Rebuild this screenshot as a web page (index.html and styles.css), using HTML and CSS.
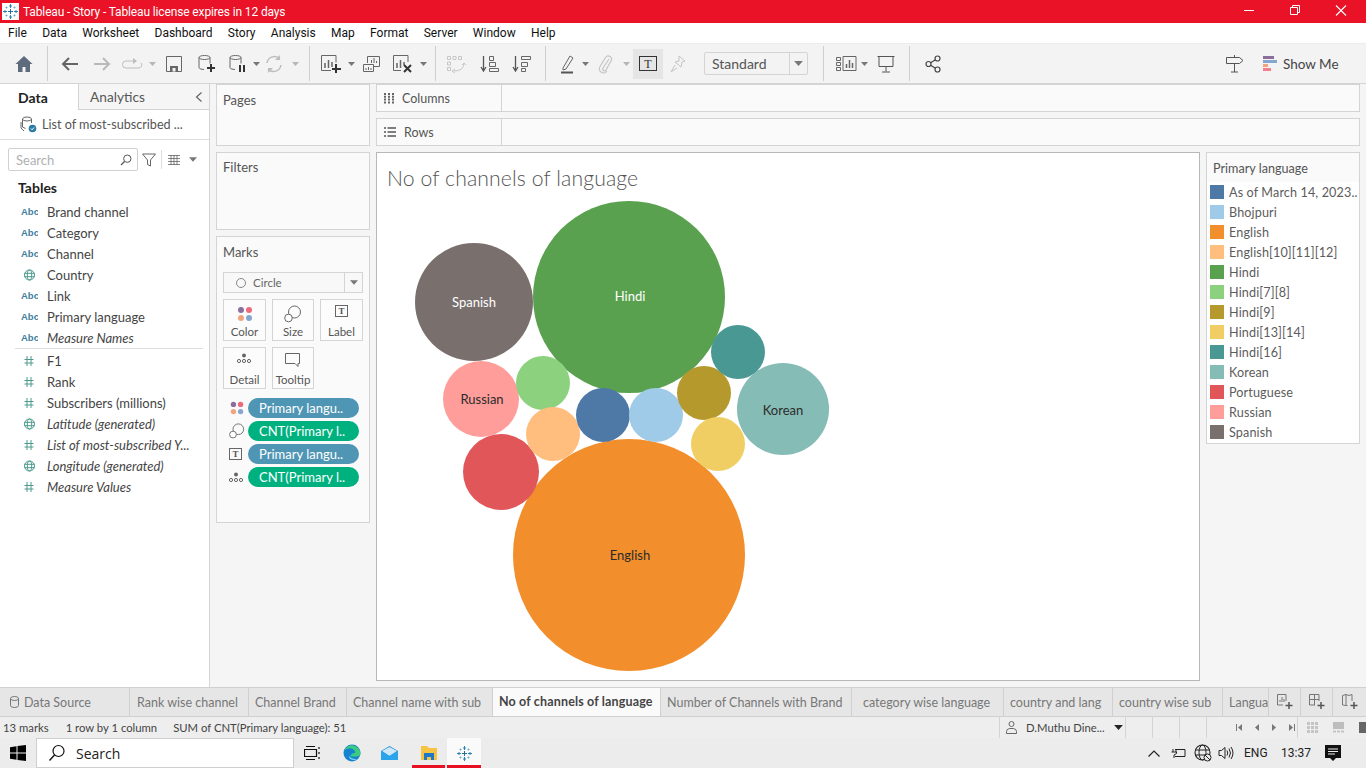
FILE: index.html
```html
<!DOCTYPE html>
<html lang="en">
<head>
<meta charset="utf-8">
<title>Tableau - Story</title>
<link rel="stylesheet" href="styles.css">
</head>
<body>
<svg class="defs" width="0" height="0" aria-hidden="true">
  <defs>
    <g id="i-abc"><text x="0" y="9" class="abc">Abc</text></g>
    <g id="i-hash"><path d="M3.5 1v10M7.5 1v10M1 4.500h9M1 8h9" stroke="#4d9a8c" fill="none"/></g>
    <g id="i-globe"><circle cx="6" cy="6" r="5" fill="none" stroke="#4d9a8c"/><ellipse cx="6" cy="6" rx="2.200" ry="5" fill="none" stroke="#4d9a8c"/><path d="M1 4.300h10M1 7.700h10" stroke="#4d9a8c"/></g>
    <g id="i-dots"><circle cx="5" cy="5" r="3" fill="#8a6f9c"/><circle cx="13" cy="5" r="3" fill="#ed6a7a"/><circle cx="5" cy="13" r="3" fill="#f2a57c"/><circle cx="13" cy="13" r="3" fill="#84a6cf"/></g>
    <g id="i-size"><circle cx="10.500" cy="7" r="6" fill="none" stroke="#666"/><circle cx="4.500" cy="13" r="3.800" fill="#fff" stroke="#666"/></g>
    <g id="i-label"><rect x=".5" y=".5" width="12" height="11" fill="none" stroke="#666"/><text x="6.500" y="9" class="t-ico">T</text></g>
    <g id="i-detail"><circle cx="7" cy="2.500" r="2" fill="#666"/><circle cx="2" cy="8" r="1.600" fill="none" stroke="#666"/><circle cx="7" cy="8" r="1.600" fill="none" stroke="#666"/><circle cx="12" cy="8" r="1.600" fill="none" stroke="#666"/></g>
    <g id="i-caret"><path d="M0 0h7L3.500 4z" fill="#777"/></g>
    <g id="i-caret-lt"><path d="M0 0h7L3.500 4z" fill="#b5b5b5"/></g>
    <g id="i-tab" fill="none">
      <path d="M8.500 6v5M6 8.500h5" stroke="#1f6f9f"/>
      <path d="M8.500 1v4M7 3h3M8.500 12v4M7 14h3M1 8.500h4M3 7v3M12 8.500h4M14 7v3" stroke="#2b83b3"/>
      <path d="M4.500 3.500v2M3.500 4.500h2M12.500 3.500v2M11.500 4.500h2M4.500 11.500v2M3.500 12.500h2M12.500 11.500v2M11.500 12.500h2" stroke="#6fa9c9"/>
    </g>
  </defs>
</svg>

<header class="titlebar">
  <svg class="tb-logo" width="17" height="17" viewBox="0 0 17 17"><rect width="17" height="17" fill="#fff"/><use href="#i-tab"/></svg>
  <span class="tb-title">Tableau - Story - Tableau license expires in 12 days</span>
  <div class="win-btns">
    <svg width="46" height="23" viewBox="0 0 46 23"><path d="M18 10.500h10" stroke="#fff"/></svg>
    <svg width="46" height="23" viewBox="0 0 46 23"><path d="M18.500 7.500h7v7h-7zM20.500 7.500v-2h7v7h-2" fill="none" stroke="#fff"/></svg>
    <svg width="46" height="23" viewBox="0 0 46 23"><path d="M18 5.500l10 10M28 5.500l-10 10" stroke="#fff" stroke-width="1.100"/></svg>
  </div>
</header>

<nav class="menubar">
  <span>File</span><span>Data</span><span>Worksheet</span><span>Dashboard</span><span>Story</span><span>Analysis</span><span>Map</span><span>Format</span><span>Server</span><span>Window</span><span>Help</span>
</nav>

<div class="toolbar">
  <svg class="ti" width="20" height="20" viewBox="0 0 20 20"><path d="M10 2 1.500 10H4v8h4.500v-5h3v5H16v-8h2.500z" fill="#5d6b7c"/></svg>
  <i class="sep s1"></i>
  <svg class="ti t-back" width="20" height="20" viewBox="0 0 20 20"><path d="M18 10H3M9 4l-6 6 6 6" fill="none" stroke="#666" stroke-width="2"/></svg>
  <svg class="ti t-fwd" width="20" height="20" viewBox="0 0 20 20"><path d="M2 10h15M11 4l6 6-6 6" fill="none" stroke="#b9b9b9" stroke-width="2"/></svg>
  <svg class="ti t-redo" width="34" height="20" viewBox="0 0 34 20"><path d="M12 7H4a3 3 0 0 0 0 7h13a3 3 0 0 0 2-5" fill="none" stroke="#bdbdbd"/><path d="M11 4l4 3-4 3z" fill="#bdbdbd"/><use href="#i-caret-lt" x="27" y="8"/></svg>
  <svg class="ti t-save" width="18" height="18" viewBox="0 0 18 18"><path d="M1.500 1.500h15v15h-15z" fill="none" stroke="#666"/><path d="M5 11h8v5.500H5z" fill="#666"/><path d="M7.500 13h3v3.500h-3z" fill="#f3f3f3"/></svg>
  <svg class="ti t-newds" width="18" height="20" viewBox="0 0 18 20"><ellipse cx="6.500" cy="3.500" rx="5.500" ry="2" fill="none" stroke="#666"/><path d="M1 3.500v10q0 2 5 2M12 3.500v6" fill="none" stroke="#666"/><path d="M13 10v8M9 14h8" stroke="#333" stroke-width="2"/></svg>
  <svg class="ti t-pause" width="32" height="20" viewBox="0 0 32 20"><ellipse cx="6.500" cy="3.500" rx="5.500" ry="2" fill="none" stroke="#666"/><path d="M1 3.500v10q0 2 5 2M12 3.500v6" fill="none" stroke="#666"/><path d="M10 11h2v7h-2zM14 11h2v7h-2z" fill="#333"/><use href="#i-caret" x="24" y="8"/></svg>
  <svg class="ti t-refresh" width="36" height="20" viewBox="0 0 36 20"><path d="M2 9a7.500 7.500 0 0 1 13-4M16 11a7.500 7.500 0 0 1-13 4" fill="none" stroke="#bdbdbd" stroke-width="1.500"/><path d="M15 1v5h-5zM3 19v-5h5z" fill="#bdbdbd"/><use href="#i-caret-lt" x="27" y="8"/></svg>
  <i class="sep s2"></i>
  <svg class="ti t-newws" width="36" height="20" viewBox="0 0 36 20"><path d="M16 1.500H1.500v15H11" fill="none" stroke="#666"/><path d="M16 1.500v7" stroke="#666"/><path d="M5 9v5M8.500 6v8M12 8v5" stroke="#666" stroke-width="1.500"/><path d="M16 10v9M12 15h9" stroke="#333" stroke-width="2"/><use href="#i-caret" x="28" y="8"/></svg>
  <svg class="ti t-dup" width="18" height="18" viewBox="0 0 18 18"><path d="M4.500 8V1.500h12v10H11" fill="none" stroke="#666"/><path d="M.5 9.500h10v7H.5z" fill="#f3f3f3" stroke="#666"/><path d="M8.500 8V5M11 8V3M13.500 8V6M3 15v-2M5.500 15v-3M8 15v-2" stroke="#666"/></svg>
  <svg class="ti t-clear" width="36" height="20" viewBox="0 0 36 20"><path d="M16 8V1.500H1.500v15H9" fill="none" stroke="#666"/><path d="M5 9v5M8.500 6v8M12 8v3" stroke="#666" stroke-width="1.500"/><path d="M12 11l7 7M19 11l-7 7" stroke="#333" stroke-width="2"/><use href="#i-caret" x="28" y="8"/></svg>
  <i class="sep s3"></i>
  <svg class="ti t-swap" width="20" height="20" viewBox="0 0 20 20"><path d="M1.500 2.500h3v3h-3zM7 2.500h3v3H7zM12.500 2.500h3v3h-3zM1.500 8h3v3h-3zM1.500 13.500h3v3h-3z" fill="none" stroke="#c6c6c6"/><path d="M18 9q0 8-10 8M6 17l3-2M6 17l3 2M18 9l-2 2M18 9l2 2" fill="none" stroke="#c6c6c6"/></svg>
  <svg class="ti t-sorta" width="20" height="20" viewBox="0 0 20 20"><path d="M3.500 2v15M1 13l2.500 4L6 13" fill="none" stroke="#555" stroke-width="1.300"/><path d="M9.500 2.500h4v4h-4zM9.500 8.500h6v4h-6zM9.500 14.500h9v3h-9z" fill="none" stroke="#666"/></svg>
  <svg class="ti t-sortd" width="20" height="20" viewBox="0 0 20 20"><path d="M3.500 2v15M1 13l2.500 4L6 13" fill="none" stroke="#555" stroke-width="1.300"/><path d="M9.500 2.500h9v3h-9zM9.500 8.500h6v4h-6zM9.500 14.500h4v3h-4z" fill="none" stroke="#666"/></svg>
  <i class="sep s4"></i>
  <svg class="ti t-high" width="30" height="20" viewBox="0 0 30 20"><path d="M3 14 10 2l3 2-7 11-3 1z" fill="none" stroke="#666"/><path d="M1 18.500h12" stroke="#555" stroke-width="2"/><use href="#i-caret" x="22" y="8"/></svg>
  <svg class="ti t-clip" width="34" height="20" viewBox="0 0 34 20"><path d="M12 5 6 14a1.800 1.800 0 0 0 3 2l5-9a3.200 3.200 0 0 0-5.500-3.500L3 12.500a4 4 0 0 0 7 4.500" fill="none" stroke="#c4c4c4" stroke-width="1.200"/><use href="#i-caret-lt" x="26" y="8"/></svg>
  <div class="t-active"><svg width="18" height="16" viewBox="0 0 18 16"><rect x=".5" y=".5" width="17" height="14" fill="none" stroke="#333"/><text x="9" y="12" class="t-ico2">T</text></svg></div>
  <svg class="ti t-pin" width="16" height="18" viewBox="0 0 16 18"><path d="M9 1l6 5-3 1-1 5-6-5 4-1zM5 10l-4 7 6-4" fill="none" stroke="#c4c4c4"/></svg>
  <div class="fitbox"><span class="fit-text">Standard</span><span class="fit-arrow"><svg width="9" height="5" viewBox="0 0 7 4"><use href="#i-caret"/></svg></span></div>
  <i class="sep s5"></i>
  <svg class="ti t-cards" width="32" height="16" viewBox="0 0 32 16"><path d="M.5 1.500h4v3h-4zM.5 6.500h4v3h-4zM.5 11.500h4v3h-4zM7 .5h13v14H7z" fill="none" stroke="#666"/><path d="M10.500 12V8M13.500 12V4M16.500 12V7" stroke="#666" stroke-width="1.500"/><use href="#i-caret" x="25" y="6"/></svg>
  <svg class="ti t-pres" width="18" height="18" viewBox="0 0 18 18"><path d="M.5 1.500h17M2 1.500V11.500h14v-10M9 11.500v5M5 17h8" fill="none" stroke="#555"/></svg>
  <i class="sep s6"></i>
  <svg class="ti t-share" width="16" height="18" viewBox="0 0 16 18"><circle cx="3.500" cy="9" r="2.500" fill="none" stroke="#444" stroke-width="1.200"/><circle cx="12.500" cy="3.500" r="2.500" fill="none" stroke="#444" stroke-width="1.200"/><circle cx="12.500" cy="14.500" r="2.500" fill="none" stroke="#444" stroke-width="1.200"/><path d="M5.700 7.700l4.700-3M5.700 10.300l4.700 3" stroke="#444" stroke-width="1.200"/></svg>
  <svg class="ti t-guide" width="18" height="18" viewBox="0 0 18 18"><path d="M8.500 0v2.500M.5 2.500h13l3.500 3-3.500 3H.5zM8.500 8.500V17M5 17h7" fill="none" stroke="#555"/></svg>
  <div class="showme">
    <span class="sm-bars"><i class="b1"></i><i class="b2"></i><i class="b3"></i><i class="b4"></i></span>
    <span>Show Me</span>
  </div>
</div>

<main class="main">
  <aside class="datapane">
    <div class="dp-tabs">
      <div class="dp-tab active">Data</div>
      <div class="dp-tab other">Analytics<svg class="chev" width="8" height="12" viewBox="0 0 8 12"><path d="M6.500 1.500 1.500 6l5 4.500" fill="none" stroke="#666" stroke-width="1.200"/></svg></div>
    </div>
    <div class="dp-source">
      <svg width="17" height="17" viewBox="0 0 17 17"><ellipse cx="7" cy="3" rx="4.500" ry="2" fill="none" stroke="#666"/><path d="M2.500 3v8l3 1.500M11.500 3v4M1 6v6l3 3" fill="none" stroke="#666"/><circle cx="12.500" cy="12.500" r="3.800" fill="#2d7aa5"/><path d="M10.800 12.500l1.300 1.300 2-2.300" stroke="#fff" fill="none"/></svg>
      <span>List of most-subscribed ...</span>
    </div>
    <div class="dp-search">
      <div class="searchbox"><span class="ph">Search</span><svg width="12" height="12" viewBox="0 0 12 12"><circle cx="7.300" cy="4.700" r="3.700" fill="none" stroke="#555"/><path d="M4.500 7.500 1 11" stroke="#555" stroke-width="1.300"/></svg></div>
      <svg class="funnel" width="14" height="14" viewBox="0 0 14 14"><path d="M.5 1h13L8.500 7v6l-3-1.500V7z" fill="none" stroke="#666"/></svg>
      <i class="dp-sep"></i>
      <svg class="listico" width="12" height="10" viewBox="0 0 12 10"><path d="M0 .5h12M0 3.500h12M0 6.500h12M0 9.500h12M3 0v10M6 0v10M9 0v10" stroke="#666" stroke-width=".8"/></svg>
      <svg class="listcaret" width="8" height="5" viewBox="0 0 7 4"><use href="#i-caret"/></svg>
    </div>
    <h2 class="tables-h">Tables</h2>
    <ul class="fields dims">
      <li><svg class="fi" viewBox="0 0 17 12"><use href="#i-abc"/></svg>Brand channel</li>
      <li><svg class="fi" viewBox="0 0 17 12"><use href="#i-abc"/></svg>Category</li>
      <li><svg class="fi" viewBox="0 0 17 12"><use href="#i-abc"/></svg>Channel</li>
      <li><svg class="fi" viewBox="-2.500 0 17 12"><use href="#i-globe"/></svg>Country</li>
      <li><svg class="fi" viewBox="0 0 17 12"><use href="#i-abc"/></svg>Link</li>
      <li><svg class="fi" viewBox="0 0 17 12"><use href="#i-abc"/></svg>Primary language</li>
      <li class="em"><svg class="fi" viewBox="0 0 17 12"><use href="#i-abc"/></svg>Measure Names</li>
    </ul>
    <ul class="fields meas">
      <li><svg class="fi" viewBox="-2.500 0 17 12"><use href="#i-hash"/></svg>F1</li>
      <li><svg class="fi" viewBox="-2.500 0 17 12"><use href="#i-hash"/></svg>Rank</li>
      <li><svg class="fi" viewBox="-2.500 0 17 12"><use href="#i-hash"/></svg>Subscribers (millions)</li>
      <li class="em"><svg class="fi" viewBox="-2.500 0 17 12"><use href="#i-globe"/></svg>Latitude (generated)</li>
      <li class="em"><svg class="fi" viewBox="-2.500 0 17 12"><use href="#i-hash"/></svg>List of most-subscribed Y...</li>
      <li class="em"><svg class="fi" viewBox="-2.500 0 17 12"><use href="#i-globe"/></svg>Longitude (generated)</li>
      <li class="em"><svg class="fi" viewBox="-2.500 0 17 12"><use href="#i-hash"/></svg>Measure Values</li>
    </ul>
  </aside>

  <section class="cards">
    <div class="card pages"><h3>Pages</h3></div>
    <div class="card filters"><h3>Filters</h3></div>
    <div class="card marks">
      <h3>Marks</h3>
      <div class="marktype">
        <span class="mt-c"></span><span class="mt-label">Circle</span>
        <span class="mt-arrow"><svg width="8" height="5" viewBox="0 0 7 4"><use href="#i-caret"/></svg></span>
      </div>
      <div class="markbtns">
        <div class="mb"><svg width="18" height="18" viewBox="0 0 18 18"><use href="#i-dots"/></svg><span>Color</span></div>
        <div class="mb"><svg width="18" height="18" viewBox="0 0 18 18"><use href="#i-size"/></svg><span>Size</span></div>
        <div class="mb"><svg width="14" height="13" viewBox="0 0 14 13"><use href="#i-label"/></svg><span>Label</span></div>
        <div class="mb"><svg width="15" height="11" viewBox="0 0 15 11"><use href="#i-detail"/></svg><span>Detail</span></div>
        <div class="mb"><svg width="16" height="15" viewBox="0 0 16 15"><path d="M.5.500h14v10H13v3l-3-3H.5z" fill="none" stroke="#666"/></svg><span>Tooltip</span></div>
      </div>
      <div class="pills">
        <div class="pillrow"><svg width="16" height="16" viewBox="0 0 18 18"><use href="#i-dots"/></svg><span class="pill blue">Primary langu..</span></div>
        <div class="pillrow"><svg width="16" height="16" viewBox="0 0 18 18"><use href="#i-size"/></svg><span class="pill green">CNT(Primary l..</span></div>
        <div class="pillrow"><svg width="14" height="13" viewBox="0 0 14 13"><use href="#i-label"/></svg><span class="pill blue">Primary langu..</span></div>
        <div class="pillrow"><svg width="15" height="11" viewBox="0 0 15 11"><use href="#i-detail"/></svg><span class="pill green">CNT(Primary l..</span></div>
      </div>
    </div>
  </section>

  <section class="workspace">
    <div class="shelf"><div class="shelf-l"><svg width="10" height="11" viewBox="0 0 10 11"><path d="M1 0v11M5 0v11M9 0v11" stroke="#555" stroke-width="1.800" stroke-dasharray="2 .8"/></svg>Columns</div></div>
    <div class="shelf"><div class="shelf-l"><svg width="12" height="10" viewBox="0 0 12 10"><path d="M0 1h2M3.500 1H12M0 5h2M3.500 5H12M0 9h2M3.500 9H12" stroke="#555" stroke-width="1.500"/></svg>Rows</div></div>
    <div class="viewrow">
      <div class="sheet">
        <div class="sheet-title">No of channels of language</div>
        <svg class="bubbles" width="822" height="527" viewBox="377 153 822 527">
          <circle cx="629" cy="297" r="96" fill="#59a14f"/>
          <circle cx="629" cy="555" r="116" fill="#f28e2b"/>
          <circle cx="474" cy="302" r="59" fill="#79706e"/>
          <circle cx="783" cy="409" r="46" fill="#86bcb6"/>
          <circle cx="481" cy="399" r="38" fill="#ff9d9a"/>
          <circle cx="501" cy="472" r="38" fill="#e15759"/>
          <circle cx="543" cy="383" r="27" fill="#8cd17d"/>
          <circle cx="553" cy="434" r="27" fill="#ffbe7d"/>
          <circle cx="603" cy="415" r="27" fill="#4e79a7"/>
          <circle cx="656" cy="415" r="27" fill="#a0cbe8"/>
          <circle cx="704" cy="393" r="27" fill="#b6992d"/>
          <circle cx="738" cy="352" r="27" fill="#499894"/>
          <circle cx="718" cy="444" r="27" fill="#f1ce63"/>
          <text x="630" y="301" class="bl wt">Hindi</text>
          <text x="630" y="560" class="bl dk">English</text>
          <text x="474" y="307" class="bl wt">Spanish</text>
          <text x="783" y="415" class="bl dk">Korean</text>
          <text x="482" y="404" class="bl dk">Russian</text>
        </svg>
      </div>
      <aside class="legend">
        <h4>Primary language</h4>
        <ul>
          <li><i class="c1"></i>As of March 14, 2023..</li>
          <li><i class="c2"></i>Bhojpuri</li>
          <li><i class="c3"></i>English</li>
          <li><i class="c4"></i>English[10][11][12]</li>
          <li><i class="c5"></i>Hindi</li>
          <li><i class="c6"></i>Hindi[7][8]</li>
          <li><i class="c7"></i>Hindi[9]</li>
          <li><i class="c8"></i>Hindi[13][14]</li>
          <li><i class="c9"></i>Hindi[16]</li>
          <li><i class="c10"></i>Korean</li>
          <li><i class="c11"></i>Portuguese</li>
          <li><i class="c12"></i>Russian</li>
          <li><i class="c13"></i>Spanish</li>
        </ul>
      </aside>
    </div>
  </section>
</main>

<div class="tabbar">
  <div class="tab ds"><svg width="9" height="12" viewBox="0 0 9 12"><path d="M.5 2.500v7q0 2 4 2t4-2v-7M.5 2.500q0-2 4-2t4 2-4 2-4-2" fill="none" stroke="#777"/></svg>Data Source</div>
  <div class="tab w-a">Rank wise channel</div>
  <div class="tab w-b">Channel Brand</div>
  <div class="tab w-c">Channel name with sub</div>
  <div class="tab current">No of channels of language</div>
  <div class="tab w-d">Number of Channels with Brand</div>
  <div class="tab w-e">category wise language</div>
  <div class="tab w-f">country and lang</div>
  <div class="tab w-g">country wise sub</div>
  <div class="tab w-h">Langua</div>
  <div class="tab-ico"><svg width="16" height="16" viewBox="0 0 16 16"><path d="M9 .5H.5V11H6M9 .5V7" fill="none" stroke="#777"/><path d="M3 8V6M5 8V3M7 8V5" stroke="#777"/><path d="M12 8v7M8.500 11.500h7" stroke="#555" stroke-width="1.500"/></svg></div>
  <div class="tab-ico"><svg width="16" height="16" viewBox="0 0 16 16"><path d="M10 .5H.5V11H6M10 .5V7M.5 5.500H10M5.500.5V11" fill="none" stroke="#777"/><path d="M12 8v7M8.500 11.500h7" stroke="#555" stroke-width="1.500"/></svg></div>
  <div class="tab-ico"><svg width="16" height="16" viewBox="0 0 16 16"><path d="M.5 1.500 4 .5l3 1 3-1V7M.5 1.500V11l3 .5h2M4 .5v11" fill="none" stroke="#777"/><path d="M12 8v7M8.500 11.500h7" stroke="#555" stroke-width="1.500"/></svg></div>
</div>

<div class="statusbar">
  <span class="st-a">13 marks</span><span class="st-b">1 row by 1 column</span><span class="st-c">SUM of CNT(Primary language): 51</span>
  <div class="st-right">
    <div class="st-user"><svg width="11" height="13" viewBox="0 0 11 13"><circle cx="5.500" cy="3" r="2.500" fill="none" stroke="#666"/><path d="M.5 12.500v-2q0-2.500 3-3h4q3 .5 3 3v2z" fill="none" stroke="#666"/></svg><span>D.Muthu Dine...</span><svg width="9" height="5" viewBox="0 0 7 4"><path d="M0 0h7L3.500 4z" fill="#222"/></svg></div>
    <i class="st-cell"></i><i class="st-cell"></i><i class="st-cell"></i>
    <div class="st-nav">
      <svg width="6" height="7" viewBox="0 0 6 7"><path d="M.5 0v7" stroke="#777"/><path d="M6 0v7L2 3.500z" fill="#777"/></svg>
      <svg width="4" height="7" viewBox="0 0 4 7"><path d="M4 0v7L0 3.500z" fill="#777"/></svg>
      <svg width="4" height="7" viewBox="0 0 4 7"><path d="M0 0v7l4-3.500z" fill="#777"/></svg>
      <svg width="6" height="7" viewBox="0 0 6 7"><path d="M5.500 0v7" stroke="#777"/><path d="M0 0v7l4-3.500z" fill="#777"/></svg>
    </div>
    <div class="st-views">
      <svg width="11" height="11" viewBox="0 0 11 11"><path d="M0 1.500h11M0 5.500h11M0 9.500h11" stroke="#c4c4c4" stroke-width="3" stroke-dasharray="3 1"/></svg>
      <svg width="11" height="11" viewBox="0 0 11 11"><path d="M0 0h11v7H0z" fill="#bdbdbd"/><path d="M0 9.500h11" stroke="#c4c4c4" stroke-width="2" stroke-dasharray="3 1"/></svg>
      <svg width="11" height="11" viewBox="0 0 11 11"><path d="M0 0h11v11H0z" fill="#666"/></svg>
    </div>
  </div>
</div>

<footer class="taskbar">
  <svg class="win" width="16" height="16" viewBox="0 0 16 16"><path d="M0 2.300 6.500 1.200v6.400H0zM7.500 1 16 0v7.600H7.500zM0 8.500h6.500v6.300L0 13.800zM7.500 8.500H16V16l-8.500-1.100z" fill="#000"/></svg>
  <div class="tsearch"><svg width="18" height="18" viewBox="0 0 18 18"><circle cx="10.500" cy="7" r="5.500" fill="none" stroke="#111" stroke-width="1.200"/><path d="M6.500 11 1.500 16.500" stroke="#111" stroke-width="1.400"/></svg><span>Search</span></div>
  <svg class="tv" width="16" height="14" viewBox="0 0 16 14"><path d="M2 .5h9M2 13.500h9M.5 3.500h12v7H.5zM15 1v2M15 6v2M15 11v2" fill="none" stroke="#111" stroke-width="1.200"/></svg>
  <svg class="edge" width="18" height="18" viewBox="0 0 18 18"><circle cx="9" cy="9" r="8.500" fill="#1583cf"/><path d="M1 7a8.500 8.500 0 0 1 16.500 2.500c0 2-1.500 3-4 3H7.500c0-2 2-3.500 4-3.500 1 0 1-1 0-2.500C9 3.500 4 3.500 1 7z" fill="#3ccb80"/><path d="M6 12c0 2.500 2 4 5 4 1 0 2-.5 3-1-4 .5-6-1-8-3z" fill="#7fd8f7"/></svg>
  <svg class="mail" width="17" height="14" viewBox="0 0 17 14"><path d="M0 5 8.500 0 17 5v9H0z" fill="#1f8fd6"/><path d="M1 5l7.500 5L16 5 8.500 1z" fill="#cfe8f8"/><path d="M0 5l8.500 5L17 5v9H0z" fill="#2aa4ea"/></svg>
  <div class="tb-app folder"><svg width="16" height="14" viewBox="0 0 16 14"><path d="M0 0h6l2 2h8v12H0z" fill="#f6c344"/><path d="M3 7h10v7h-3v-3H6v3H3z" fill="#1e78c8"/></svg></div>
  <div class="tb-app tableau"><svg width="17" height="17" viewBox="0 0 17 17"><use href="#i-tab"/></svg></div>
  <div class="tray">
    <svg width="12" height="7" viewBox="0 0 12 7"><path d="M.5 6.500 6 1l5.500 5.500" fill="none" stroke="#222" stroke-width="1.200"/></svg>
    <svg class="tr-bat" width="16" height="10" viewBox="0 0 16 10"><path d="M5 1.500h10v7H5M3 1v3M6 1v3M1.500 4h5v1.500L4 7v3" fill="none" stroke="#222"/></svg>
    <svg class="tr-net" width="18" height="18" viewBox="0 0 18 18"><circle cx="8.500" cy="8.500" r="7.500" fill="none" stroke="#222" stroke-width="1.100"/><ellipse cx="8.500" cy="8.500" rx="3.500" ry="7.500" fill="none" stroke="#222"/><path d="M1 6h15M1 11h15" stroke="#222"/><circle cx="13.500" cy="13.500" r="3.500" fill="#ececec" stroke="#222"/><path d="M11 11l5 5" stroke="#222"/></svg>
    <svg class="tr-vol" width="16" height="14" viewBox="0 0 16 14"><path d="M1 4.500h2.500L7 1.500v11l-3.500-3H1zM9 4.500q1.500 2.500 0 5M11 2.500q3 4.500 0 9M13 1q4 6 0 12" fill="none" stroke="#222"/></svg>
    <span class="tr-lang">ENG</span>
    <span class="tr-time">13:37</span>
    <svg class="tr-note" width="16" height="16" viewBox="0 0 16 16"><path d="M0 0h16v13h-5l-3 3-3-3H0z" fill="#111"/><path d="M3 4h10M3 6.500h10M3 9h7" stroke="#ececec"/></svg>
  </div>
</footer>
</body>
</html>
```

FILE: styles.css
```css
* { box-sizing: border-box; }
html, body { margin: 0; padding: 0; }
body {
  width: 1366px; height: 768px; overflow: hidden;
  display: flex; flex-direction: column;
  font-family: Lato, "Open Sans", sans-serif;
  font-size: 13px; color: #555; background: #f5f5f5;
}
ul { list-style: none; margin: 0; padding: 0; }
h2, h3, h4 { margin: 0; font-weight: 400; }
i { display: block; font-style: normal; }
svg { display: block; flex: none; }
.defs { position: absolute; }
.abc { font: 700 9.5px "Liberation Sans", sans-serif; fill: #3f7f9e; }
.t-ico { font: 700 9px "Liberation Serif", serif; fill: #555; text-anchor: middle; }
.t-ico2 { font: 400 12px "Liberation Serif", serif; fill: #333; text-anchor: middle; }

/* title bar */
.titlebar { height: 23px; background: #ea1226; display: flex; align-items: center; color: #fff; flex: none; }
.tb-logo { margin-left: 2px; }
.tb-title { margin-left: 4px; font-size: 12px; letter-spacing: -.135px; font-family: Roboto, sans-serif; }
.win-btns { margin-left: auto; display: flex; margin-right: 2px; }

/* menu */
.menubar { height: 20px; background: #fff; flex: none; display: flex; align-items: center; padding-left: 8px; gap: 15.3px; font-family: Roboto, sans-serif; font-size: 12px; color: #111; }

/* toolbar */
.toolbar { height: 41px; background: #f3f3f3; border-top: 1px solid #ededed; border-bottom: 1px solid #d4d4d4; flex: none; display: flex; align-items: center; padding-left: 14px; }
.sep { width: 1px; height: 35px; background: #cfcfcf; }
.s1 { margin-left: 13px; }
.t-back { margin-left: 12px; }
.t-fwd { margin-left: 12px; }
.t-redo { margin-left: 10px; }
.t-save { margin-left: 9px; }
.t-newds { margin-left: 15px; }
.t-pause { margin-left: 13px; }
.t-refresh { margin-left: 4px; }
.s2 { margin-left: 8px; }
.t-newws { margin-left: 10px; }
.t-dup { margin-left: 7px; }
.t-clear { margin-left: 11px; }
.s3 { margin-left: 7px; }
.t-swap { margin-left: 10px; }
.t-sorta { margin-left: 14px; }
.t-sortd { margin-left: 12px; }
.s4 { margin-left: 13px; }
.t-high { margin-left: 14px; }
.t-clip { margin-left: 7px; }
.t-active { width: 30px; height: 30px; background: #e5e5e5; display: flex; align-items: center; justify-content: center; margin-left: 2px; }
.t-pin { margin-left: 7px; }
.fitbox { width: 104px; height: 23px; margin-left: 18px; border: 1px solid #d4d4d4; border-radius: 2px; display: flex; align-items: center; font-size: 14px; color: #555; }
.fit-text { flex: 1; padding-left: 7px; }
.fit-arrow { width: 18px; height: 100%; border-left: 1px solid #d4d4d4; display: flex; align-items: center; justify-content: center; }
.s5 { margin-left: 15px; }
.t-cards { margin-left: 12px; }
.t-pres { margin-left: 9px; }
.s6 { margin-left: 14px; }
.t-share { margin-left: 15px; }
.t-guide { margin-left: 285px; }
.showme { margin-left: 19px; display: flex; align-items: center; gap: 6px; font-size: 13.5px; color: #444; }
.sm-bars { display: flex; flex-direction: column; gap: 1px; width: 14px; }
.sm-bars i { height: 3px; }
.b1 { width: 11px; background: #8a6f9c; }
.b2 { width: 14px; background: #84a6cf; }
.b3 { width: 5px; background: #f2a57c; }
.b4 { width: 8px; background: #f47f8a; }

/* main */
.main { flex: 1; min-height: 0; display: flex; background: #f5f5f5; }
.datapane { width: 210px; background: #fff; border-right: 1px solid #d4d4d4; flex: none; }
.dp-tabs { display: flex; height: 26px; }
.dp-tab { display: flex; align-items: center; font-size: 14px; }
.dp-tab.active { width: 78px; padding-left: 18px; font-weight: 700; color: #222; }
.dp-tab.other { flex: 1; padding-left: 11px; padding-right: 6px; background: #f5f5f5; border-left: 1px solid #d4d4d4; border-bottom: 1px solid #d4d4d4; color: #555; justify-content: space-between; font-size: 13.7px; }
.dp-source { height: 30px; border-bottom: 1px solid #dedede; display: flex; align-items: center; padding-left: 20px; gap: 5px; font-size: 12.6px; color: #555; }
.dp-search { display: flex; align-items: center; height: 23px; margin-top: 8px; padding-left: 8px; }
.searchbox { width: 130px; height: 23px; border: 1px solid #d0d0d0; border-radius: 2px; display: flex; align-items: center; justify-content: space-between; padding: 0 5px 0 7px; }
.ph { color: #b0b0b0; font-size: 13px; }
.funnel { margin-left: 4px; }
.dp-sep { width: 1px; height: 19px; background: #ddd; margin-left: 5px; }
.listico { margin-left: 6px; }
.listcaret { margin-left: 9px; }
.tables-h { font-size: 14px; font-weight: 700; color: #222; padding: 8px 0 0 18px; height: 29px; line-height: 18px; }
.fields li { height: 21px; display: flex; align-items: center; padding-left: 21px; font-size: 13px; color: #444; white-space: nowrap; }
.dims { padding-top: 1px; }
.meas { border-top: 1px solid #dedede; margin-left: 15px; width: 188px; padding-top: 1px; }
.meas li { padding-left: 6px; }
.fields li.em { font-style: italic; }
.fi { width: 17px; height: 12px; margin-right: 9px; }

/* cards */
.cards { width: 154px; margin-left: 6px; flex: none; display: flex; flex-direction: column; }
.card { background: #fafafa; border: 1px solid #d4d4d4; }
.card h3 { font-size: 13px; color: #555; padding: 7px 0 0 6px; line-height: 16px; }
.pages { height: 62px; }
.filters { height: 78px; margin-top: 6px; }
.filters h3 { padding-top: 6px; }
.marks { height: 287px; margin-top: 6px; }
.marktype { width: 140px; height: 21px; margin: 12px 0 0 6px; border: 1px solid #d4d4d4; background: #f8f8f8; display: flex; align-items: center; font-size: 11.5px; color: #666; }
.mt-c { width: 10px; height: 10px; border: 1px solid #888; border-radius: 50%; margin-left: 12px; }
.mt-label { margin-left: 7px; flex: 1; }
.mt-arrow { width: 18px; height: 100%; border-left: 1px solid #d4d4d4; display: flex; align-items: center; justify-content: center; }
.markbtns { display: grid; grid-template-columns: 43px 42px 43px; gap: 6px; margin: 6px 0 0 6px; }
.mb { height: 42px; background: #fcfcfc; border: 1px solid #d4d4d4; display: flex; flex-direction: column; align-items: center; justify-content: flex-end; font-size: 11.5px; color: #555; padding-bottom: 2px; }
.mb svg { margin-bottom: auto; margin-top: 5px; }
.pills { margin: 9px 0 0 12px; display: flex; flex-direction: column; gap: 3px; }
.pillrow { display: flex; align-items: center; justify-content: space-between; height: 20px; width: 130px; }
.pill { width: 111px; height: 20px; border-radius: 10px; color: #fff; font-size: 13px; line-height: 20px; padding-left: 11px; white-space: nowrap; }
.blue { background: #4f96b5; }
.green { background: #00b180; }

/* workspace */
.workspace { flex: 1; min-width: 0; margin-left: 6px; margin-right: 6px; display: flex; flex-direction: column; }
.shelf { height: 28px; background: #fafafa; border: 1px solid #d4d4d4; margin-bottom: 6px; display: flex; flex: none; }
.shelf-l { width: 125px; border-right: 1px solid #d4d4d4; display: flex; align-items: center; padding-left: 7px; gap: 8px; font-size: 12.5px; color: #555; }
.viewrow { flex: 1; min-height: 0; display: flex; margin-bottom: 6px; }
.sheet { width: 824px; height: 529px; background: #fff; border: 1px solid #b8b8b8; position: relative; overflow: hidden; }
.sheet-title { position: absolute; left: 10px; top: 12px; font-size: 21.2px; font-weight: 300; line-height: 26px; color: #555; letter-spacing: .005em; }
.bubbles { position: absolute; left: 0; top: 0; }
.bl { font: 400 13px Lato, sans-serif; text-anchor: middle; }
.wt { fill: #fff; }
.dk { fill: #2b2b2b; }
.legend { width: 154px; height: 292px; margin-left: 6px; background: #fff; border: 1px solid #d4d4d4; }
.legend h4 { background: #fafafa; height: 29px; padding: 8px 0 0 6px; font-size: 12.6px; color: #555; line-height: 16px; }
.legend li { height: 20px; display: flex; align-items: center; font-size: 12.6px; color: #5c5c5c; padding-left: 3px; white-space: nowrap; letter-spacing: .01em; }
.legend li i { width: 14px; height: 14px; margin-right: 5px; flex: none; }
.c1 { background: #4e79a7; } .c2 { background: #a0cbe8; } .c3 { background: #f28e2b; }
.c4 { background: #ffbe7d; } .c5 { background: #59a14f; } .c6 { background: #8cd17d; }
.c7 { background: #b6992d; } .c8 { background: #f1ce63; } .c9 { background: #499894; }
.c10 { background: #86bcb6; } .c11 { background: #e15759; } .c12 { background: #ff9d9a; }
.c13 { background: #79706e; }

/* tabs */
.tabbar { height: 30px; background: #e6e6e6; border-top: 1px solid #d0d0d0; border-bottom: 1px solid #d0d0d0; flex: none; display: flex; align-items: stretch; font-size: 12.5px; color: #777; }
.tab { display: flex; align-items: center; padding-left: 6px; border-right: 1px solid #d0d0d0; white-space: nowrap; overflow: hidden; }
.ds { width: 130px; padding-left: 10px; gap: 5px; }
.w-a { width: 119px; padding-left: 7px; } .w-b { width: 98px; } .w-c { width: 146px; }
.current { width: 168px; background: #fafafa; color: #444; font-weight: 700; padding-bottom: 2px; letter-spacing: .012em; }
.w-d { width: 191px; } .w-e { width: 152px; padding-left: 11px; } .w-f { width: 109px; } .w-g { width: 110px; }
.w-h { width: 46px; }
.tab-ico { width: 32px; border-right: 1px solid #d0d0d0; display: flex; align-items: center; justify-content: center; }
.tab-ico:last-child { border-right: 0; flex: 1; }

/* status */
.statusbar { height: 21px; background: #eee; flex: none; display: flex; align-items: center; font-size: 11.3px; color: #444; padding-left: 3px; }
.st-b { margin-left: 17px; }
.st-c { margin-left: 16px; }
.st-right { margin-left: auto; display: flex; height: 100%; align-items: center; }
.st-user { width: 127px; height: 100%; border-left: 1px solid #d4d4d4; border-right: 1px solid #d4d4d4; display: flex; align-items: center; padding-left: 6px; gap: 9px; color: #444; }
.st-user span { white-space: nowrap; }
.st-cell { width: 27px; height: 100%; border-right: 1px solid #d4d4d4; }
.st-nav { width: 91px; height: 100%; border-right: 1px solid #d4d4d4; display: flex; align-items: center; gap: 13px; padding-left: 29px; }
.st-views { width: 68px; display: flex; gap: 15px; padding-left: 9px; }

/* taskbar */
.taskbar { height: 30px; background: #ececec; flex: none; display: flex; align-items: center; color: #111; }
.win { margin-left: 10px; }
.tsearch { width: 258px; height: 30px; margin-left: 10px; background: #fff; border: 1px solid #cfcfcf; display: flex; align-items: center; padding-left: 11px; gap: 10px; font-family: "Open Sans", sans-serif; font-size: 14px; color: #222; }
.tv { margin-left: 10px; }
.edge { margin-left: 23px; }
.mail { margin-left: 20px; }
.tb-app { height: 30px; display: flex; align-items: center; justify-content: center; border-bottom: 3px solid #e81123; padding-top: 3px; }
.folder { width: 33px; margin-left: 14px; }
.tableau { width: 34px; margin-left: 2px; background: #fafafa; }
.tray { margin-left: auto; display: flex; align-items: center; font-family: Roboto, sans-serif; font-size: 12px; color: #222; padding-right: 25px; }
.tr-bat { margin-left: 10px; }
.tr-net { margin-left: 8px; }
.tr-vol { margin-left: 6px; }
.tr-lang { margin-left: 10px; width: 23px; }
.tr-time { margin-left: 14px; width: 27px; }
.tr-note { margin-left: 17px; }
```
